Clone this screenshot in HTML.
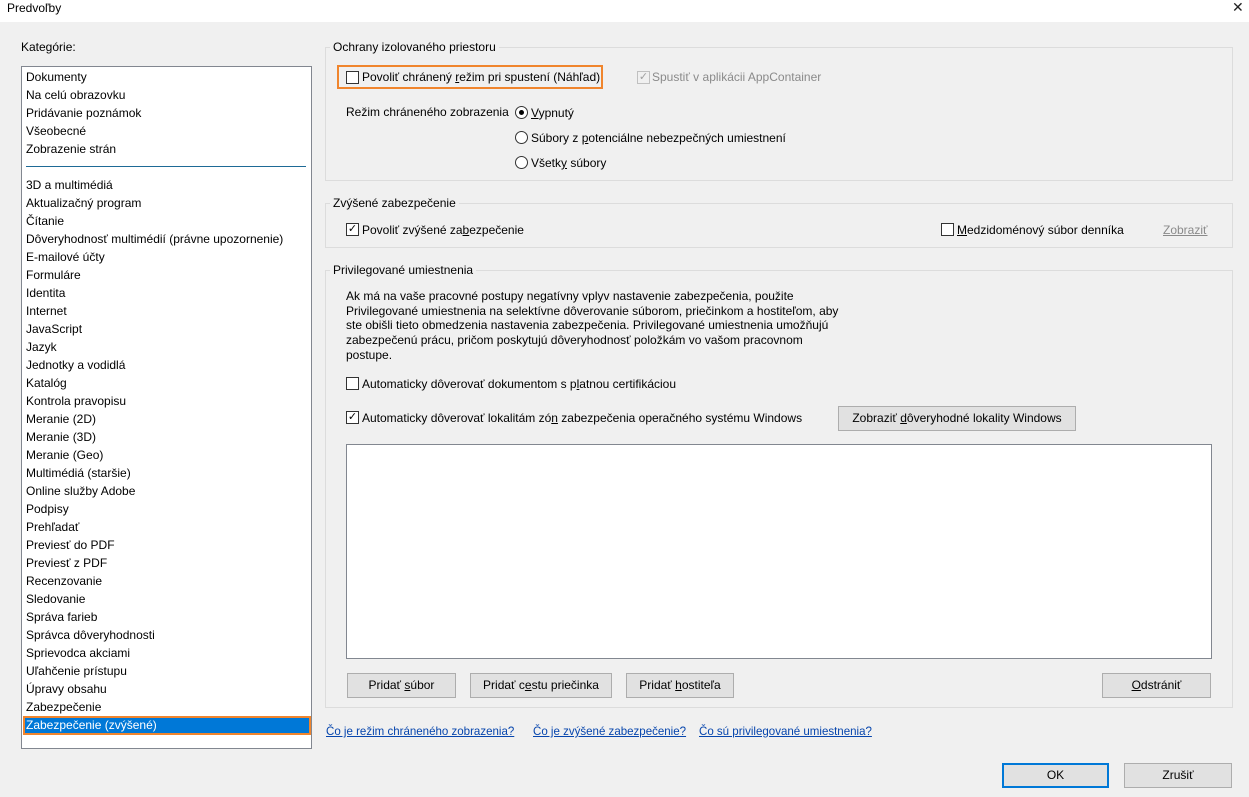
<!DOCTYPE html>
<html><head><meta charset="utf-8"><style>
*{margin:0;padding:0;box-sizing:border-box}
body{width:1249px;height:797px;background:#f0f0f0;font-family:"Liberation Sans",sans-serif;font-size:12px;color:#000;position:relative;overflow:hidden}
.a{position:absolute;white-space:nowrap}
.t{line-height:16px}
.grp{position:absolute;border:1px solid #dcdcdc}
.lg{position:absolute;background:#f0f0f0;padding:0 3px;line-height:14px}
.cb{position:absolute;width:13px;height:13px;border:1px solid #333;background:#fff}
.rb{position:absolute;width:13px;height:13px;border:1px solid #333;border-radius:50%;background:#fff}
.btn{position:absolute;border:1px solid #adadad;background:#e1e1e1;text-align:center;font-size:12px;line-height:22px}
.lk{color:#0645ad;text-decoration:underline;transform:scaleX(0.96);transform-origin:left}
u{text-decoration:underline}
</style></head><body>
<div class="a" style="left:0;top:0;width:1249px;height:22px;background:#fff"></div>
<div class="a t" style="left:7px;top:0">Predvoľby</div>
<div class="a" style="left:1232px;top:-1px;font-size:14px;color:#222">✕</div>

<div class="a t" style="left:21px;top:39px">Kategórie:</div>
<div class="a" style="left:21px;top:66px;width:291px;height:683px;background:#fff;border:1px solid #828790"></div>
<div class="a" style="left:26px;top:68px;line-height:18px">Dokumenty<br>Na celú obrazovku<br>Pridávanie poznámok<br>Všeobecné<br>Zobrazenie strán</div>
<div class="a" style="left:26px;top:166px;width:280px;height:1px;background:#1e6a96"></div>
<div class="a" style="left:26px;top:176px;line-height:18px">3D a multimédiá<br>Aktualizačný program<br>Čítanie<br>Dôveryhodnosť multimédií (právne upozornenie)<br>E-mailové účty<br>Formuláre<br>Identita<br>Internet<br>JavaScript<br>Jazyk<br>Jednotky a vodidlá<br>Katalóg<br>Kontrola pravopisu<br>Meranie (2D)<br>Meranie (3D)<br>Meranie (Geo)<br>Multimédiá (staršie)<br>Online služby Adobe<br>Podpisy<br>Prehľadať<br>Previesť do PDF<br>Previesť z PDF<br>Recenzovanie<br>Sledovanie<br>Správa farieb<br>Správca dôveryhodnosti<br>Sprievodca akciami<br>Uľahčenie prístupu<br>Úpravy obsahu<br>Zabezpečenie</div>
<div class="a" style="left:23px;top:716px;width:288px;height:19px;background:#0078d7;border:2px solid #f0852d"></div>
<div class="a" style="left:26px;top:716px;line-height:18px;color:#fff">Zabezpečenie (zvýšené)</div>

<div class="grp" style="left:325px;top:47px;width:908px;height:134px"></div>
<div class="lg" style="left:330px;top:40px">Ochrany izolovaného priestoru</div>
<div class="a" style="left:337px;top:65px;width:266px;height:24px;border:2px solid #f0852d"></div>
<div class="cb" style="left:346px;top:71px"></div>
<div class="a t" style="left:362px;top:69px">Povoliť chránený <u>r</u>ežim pri spustení (Náhľad)</div>
<div class="cb" style="left:637px;top:71px;border-color:#c0c0c0;background:#f0f0f0;color:#a0a0a0;font-size:11px;line-height:11px;text-align:center">✓</div>
<div class="a t" style="left:652px;top:69px;color:#8a8a8a">Spustiť v aplikácii AppContainer</div>
<div class="a t" style="left:346px;top:104px">Režim chráneného zobrazenia</div>
<div class="rb" style="left:515px;top:106px"><div style="position:absolute;left:3px;top:3px;width:5px;height:5px;border-radius:50%;background:#000"></div></div>
<div class="a t" style="left:531px;top:105px"><u>V</u>ypnutý</div>
<div class="rb" style="left:515px;top:131px"></div>
<div class="a t" style="left:531px;top:130px">Súbory z <u>p</u>otenciálne nebezpečných umiestnení</div>
<div class="rb" style="left:515px;top:156px"></div>
<div class="a t" style="left:531px;top:155px">Všetk<u>y</u> súbory</div>

<div class="grp" style="left:325px;top:203px;width:908px;height:45px"></div>
<div class="lg" style="left:330px;top:196px">Zvýšené zabezpečenie</div>
<div class="cb" style="left:346px;top:223px;font-size:11px;line-height:11px;text-align:center">✓</div>
<div class="a t" style="left:362px;top:222px">Povoliť zvýšené za<u>b</u>ezpečenie</div>
<div class="cb" style="left:941px;top:223px"></div>
<div class="a t" style="left:957px;top:222px"><u>M</u>edzidoménový súbor denníka</div>
<div class="a t" style="left:1163px;top:222px;color:#8a8a8a;text-decoration:underline">Zobraziť</div>

<div class="grp" style="left:325px;top:270px;width:908px;height:438px"></div>
<div class="lg" style="left:330px;top:263px">Privilegované umiestnenia</div>
<div class="a" style="left:346px;top:289px;line-height:14.7px">Ak má na vaše pracovné postupy negatívny vplyv nastavenie zabezpečenia, použite<br>Privilegované umiestnenia na selektívne dôverovanie súborom, priečinkom a hostiteľom, aby<br>ste obišli tieto obmedzenia nastavenia zabezpečenia. Privilegované umiestnenia umožňujú<br>zabezpečenú prácu, pričom poskytujú dôveryhodnosť položkám vo vašom pracovnom<br>postupe.</div>
<div class="cb" style="left:346px;top:377px"></div>
<div class="a t" style="left:362px;top:376px">Automaticky dôverovať dokumentom s p<u>l</u>atnou certifikáciou</div>
<div class="cb" style="left:346px;top:411px;font-size:11px;line-height:11px;text-align:center">✓</div>
<div class="a t" style="left:362px;top:410px">Automaticky dôverovať lokalitám zó<u>n</u> zabezpečenia operačného systému Windows</div>
<div class="btn" style="left:838px;top:406px;width:238px;height:25px">Zobraziť <u>d</u>ôveryhodné lokality Windows</div>
<div class="a" style="left:346px;top:444px;width:866px;height:215px;background:#fff;border:1px solid #828790"></div>
<div class="btn" style="left:347px;top:673px;width:109px;height:25px">Pridať <u>s</u>úbor</div>
<div class="btn" style="left:470px;top:673px;width:142px;height:25px">Pridať c<u>e</u>stu priečinka</div>
<div class="btn" style="left:626px;top:673px;width:108px;height:25px">Pridať <u>h</u>ostiteľa</div>
<div class="btn" style="left:1102px;top:673px;width:109px;height:25px"><u>O</u>dstrániť</div>

<div class="a t lk" style="left:326px;top:723px">Čo je režim chráneného zobrazenia?</div>
<div class="a t lk" style="left:533px;top:723px">Čo je zvýšené zabezpečenie?</div>
<div class="a t lk" style="left:699px;top:723px">Čo sú privilegované umiestnenia?</div>

<div class="btn" style="left:1002px;top:763px;width:107px;height:25px;border:2px solid #0078d7;line-height:21px">OK</div>
<div class="btn" style="left:1124px;top:763px;width:108px;height:25px">Zrušiť</div>
</body></html>
